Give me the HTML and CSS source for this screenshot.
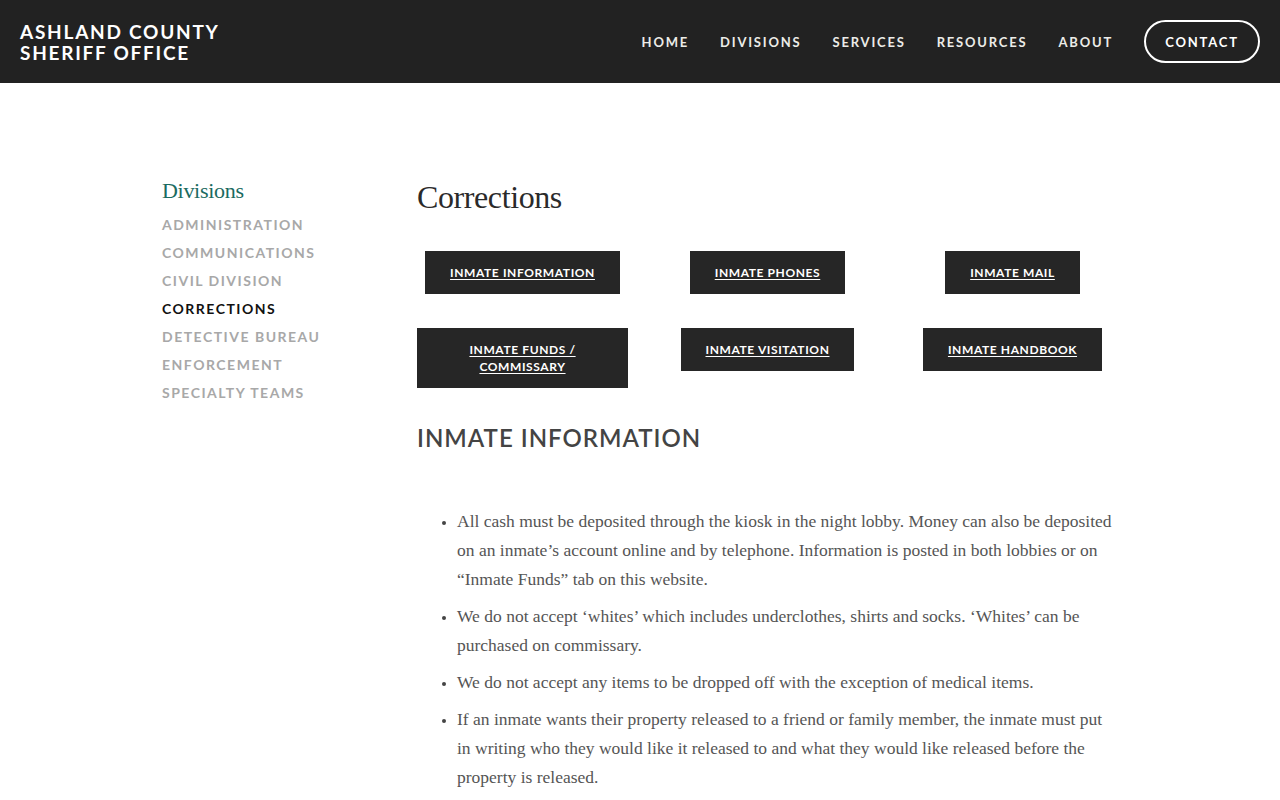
FILE: index.html
```html
<!DOCTYPE html>
<html lang="en">
<head>
<meta charset="utf-8">
<title>Corrections — Ashland County Sheriff Office</title>
<link rel="stylesheet" href="styles.css">
</head>
<body>
<header class="topbar">
  <a class="logo" href="#"><span>ASHLAND COUNTY</span><span>SHERIFF OFFICE</span></a>
  <nav class="mainnav">
    <a href="#">HOME</a>
    <a href="#">DIVISIONS</a>
    <a href="#">SERVICES</a>
    <a href="#">RESOURCES</a>
    <a href="#">ABOUT</a>
    <a href="#" class="contact">CONTACT</a>
  </nav>
</header>
<div class="page">
  <aside class="sidebar">
    <h2 class="side-title">Divisions</h2>
    <ul class="side-list">
      <li><a href="#">ADMINISTRATION</a></li>
      <li><a href="#">COMMUNICATIONS</a></li>
      <li><a href="#">CIVIL DIVISION</a></li>
      <li><a href="#" class="active">CORRECTIONS</a></li>
      <li><a href="#">DETECTIVE BUREAU</a></li>
      <li><a href="#">ENFORCEMENT</a></li>
      <li><a href="#">SPECIALTY TEAMS</a></li>
    </ul>
  </aside>
  <main class="content">
    <h1 class="page-title">Corrections</h1>
    <div class="btn-grid">
      <a class="btn" href="#">INMATE INFORMATION</a>
      <a class="btn mid" href="#">INMATE PHONES</a>
      <a class="btn" href="#">INMATE MAIL</a>
      <a class="btn wide" href="#">INMATE FUNDS /<br>COMMISSARY</a>
      <a class="btn mid" href="#">INMATE VISITATION</a>
      <a class="btn" href="#">INMATE HANDBOOK</a>
    </div>
    <h2 class="section-title">INMATE INFORMATION</h2>
    <ul class="info-list">
      <li>All cash must be deposited through the kiosk in the night lobby. Money can also be deposited on an inmate’s account online and by telephone. Information is posted in both lobbies or on “Inmate Funds” tab on this website.</li>
      <li>We do not accept ‘whites’ which includes underclothes, shirts and socks. ‘Whites’ can be purchased on commissary.</li>
      <li>We do not accept any items to be dropped off with the exception of medical items.</li>
      <li>If an inmate wants their property released to a friend or family member, the inmate must put in writing who they would like it released to and what they would like released before the property is released.</li>
    </ul>
  </main>
</div>
</body>
</html>
```
FILE: styles.css
```css
* { box-sizing: border-box; }
html, body { margin: 0; padding: 0; background: #fff; }
body { font-family: "Liberation Serif", serif; }
a { text-decoration: none; color: inherit; }

.topbar {
  height: 83px;
  background: #222222;
  display: flex;
  align-items: center;
  justify-content: space-between;
  padding: 0 20px;
}
.logo {
  display: flex;
  flex-direction: column;
  font-family: Lato, "Liberation Sans", sans-serif;
  font-weight: 700;
  color: #fff;
  font-size: 19px;
  line-height: 21px;
  letter-spacing: 1.75px;
  margin-top: 1px;
}
.mainnav {
  display: flex;
  align-items: center;
  gap: 31px;
}
.mainnav a {
  font-family: Lato, "Liberation Sans", sans-serif;
  font-weight: 700;
  color: #ecece8;
  font-size: 13px;
  letter-spacing: 1.8px;
}
.mainnav a.contact {
  border: 2px solid #fff;
  border-radius: 22px;
  height: 43px;
  width: 116px;
  display: flex;
  align-items: center;
  justify-content: center;
  color: #fff;
}

.page {
  display: flex;
  padding: 0 0 0 162px;
}
.sidebar {
  width: 255px;
  flex: none;
  padding-top: 93px;
}
.side-title {
  font-family: "Liberation Serif", serif;
  font-weight: 400;
  color: #1b6b61;
  font-size: 22px;
  letter-spacing: -0.3px;
  margin: 0 0 5px;
  line-height: 30px;
}
.side-list {
  list-style: none;
  margin: 0;
  padding: 0;
}
.side-list li { height: 28px; line-height: 28px; }
.side-list a {
  font-family: Lato, "Liberation Sans", sans-serif;
  font-weight: 700;
  font-size: 14px;
  letter-spacing: 1.5px;
  color: #a8a8a8;
}
.side-list a.active { color: #111; }

.content {
  width: 695px;
  padding-top: 92px;
}
.page-title {
  font-family: "Liberation Serif", serif;
  font-weight: 400;
  font-size: 32px;
  color: #2a2a2a;
  margin: 0 0 32px;
  line-height: 44px;
  letter-spacing: -0.4px;
}
.btn-grid {
  display: grid;
  grid-template-columns: 211px 294px 181px;
  row-gap: 34px;
  align-items: start;
}
.btn {
  justify-self: center;
  background: #262626;
  color: #fff;
  font-family: Lato, "Liberation Sans", sans-serif;
  font-weight: 700;
  font-size: 12px;
  letter-spacing: 0.6px;
  line-height: 17px;
  text-decoration: underline;
  text-underline-offset: 2px;
  text-align: center;
  padding: 13px 25px;
}
.btn.wide { width: 211px; padding: 13px 10px; }
.btn.mid { margin-right: 15px; }

.section-title {
  font-family: Lato, "Liberation Sans", sans-serif;
  font-weight: 600;
  font-size: 24px;
  color: #444;
  letter-spacing: 1px;
  margin: 35px 0 0;
  line-height: 30px;
}
.info-list {
  margin: 54px 0 0;
  padding: 0 0 0 40px;
  color: #555;
  font-size: 17.5px;
  line-height: 29px;
}
.info-list li { margin-bottom: 8px; padding-left: 0; }
.info-list li::marker { font-size: 14px; color: #444; }
```
